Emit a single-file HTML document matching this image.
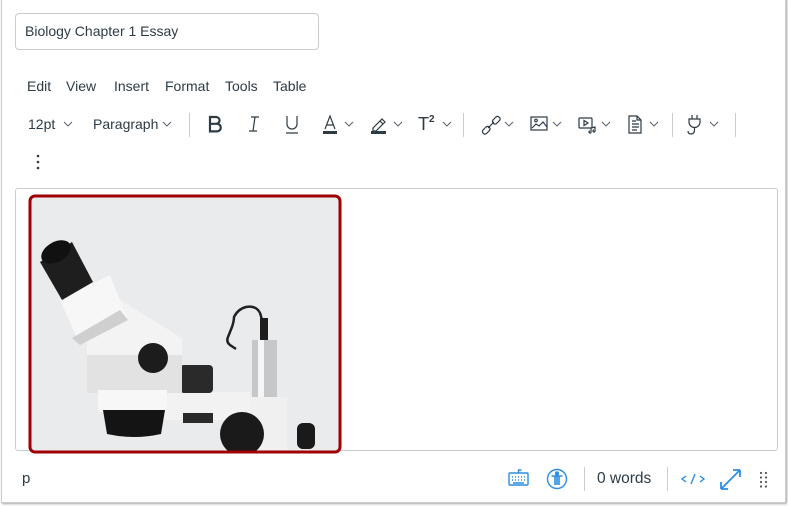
<!DOCTYPE html>
<html><head><meta charset="utf-8">
<style>
*{margin:0;padding:0;box-sizing:border-box}
body{width:788px;height:506px;background:#fff;position:relative;overflow:hidden;font-family:"Liberation Sans",sans-serif;color:#2d3b45}
.frame{position:absolute;left:1px;top:-2px;width:785px;height:505px;border:1px solid #c7cdd1;box-shadow:1px 1px 2px rgba(0,0,0,.35)}
.abs{position:absolute}
.title{left:15px;top:13px;width:304px;height:37px;border:1px solid #c7cdd1;border-radius:4px;font-size:14px;line-height:35px;padding-left:9px}
.menu{top:78px;font-size:14px}
.tb{top:116px;font-size:14px}
.sep{width:1px;background:#c7cdd1}
svg{position:absolute;overflow:visible}
.edit{left:15px;top:188px;width:763px;height:263px;border:1px solid #c7cdd1;border-radius:3px}
.blue{stroke:#2b8de3;fill:none}
</style></head><body>
<div class="frame"></div>
<div class="abs title">Biology Chapter 1 Essay</div>
<div class="abs menu" style="left:27px">Edit</div>
<div class="abs menu" style="left:66px">View</div>
<div class="abs menu" style="left:114px">Insert</div>
<div class="abs menu" style="left:165px">Format</div>
<div class="abs menu" style="left:225px">Tools</div>
<div class="abs menu" style="left:273px">Table</div>

<div class="abs tb" style="left:28px">12pt</div>
<div class="abs tb" style="left:93px">Paragraph</div>
<div class="abs sep" style="left:189px;top:113px;height:24px"></div>
<div class="abs sep" style="left:463px;top:113px;height:24px"></div>
<div class="abs sep" style="left:672px;top:113px;height:24px"></div>
<div class="abs sep" style="left:735px;top:113px;height:24px"></div>
<div class="abs" style="left:418px;top:114px;font-size:18px">T<span style="font-size:10px;vertical-align:8px;font-weight:bold">2</span></div>

<svg width="788" height="200" style="left:0;top:0" fill="none" stroke="#2d3b45" stroke-width="1.2">
 <g stroke-width="0.9" stroke="#556">
 <polyline points="64,122 68,126 72,122"/><polyline points="163,122 167,126 171,122"/>
 <polyline points="345,122 349,126 353,122"/><polyline points="394,122 398,126 402,122"/>
 <polyline points="443,122 447,126 451,122"/><polyline points="505,122 509,126 513,122"/>
 <polyline points="553,122 557,126 561,122"/><polyline points="602,122 606,126 610,122"/>
 <polyline points="650,122 654,126 658,122"/><polyline points="710,122 714,126 718,122"/>
 </g>
 <path d="M210 117h6a3.6 3.4 0 0 1 0 6.8h-6zM210 123.8h7a3.8 3.8 0 0 1 0 7.6h-7zM210 116v16" stroke-width="2.2"/>
 <path d="M251 117h8M249 131h8M255 117l-2 14"/>
 <path d="M287 116v8a5 5 0 0 0 10 0v-8M286 133h12"/>
 <path d="M325 129l5-13 5 13M327 125h6"/><rect x="323" y="131" width="14" height="3" fill="#2d3b45" stroke="none"/>
 <path d="M373 128l9-9 3 3-9 9h-3zM380 121l3 3"/><rect x="371" y="131" width="15" height="3" fill="#2d3b45" stroke="none"/>
 <path d="M486 127l-3 3a2.5 2.5 0 0 0 3.5 3.5l3-3a2.5 2.5 0 0 0-3.5-3.5zM496 117l-3 3a2.5 2.5 0 0 0 3.5 3.5l3-3a2.5 2.5 0 0 0-3.5-3.5zM488 128l6-6"/>
 <rect x="531" y="117" width="16" height="13"/><path d="M532 128l4-4 3 2 4-4 4 5"/><circle cx="536" cy="120.5" r="1.3"/>
 <rect x="579" y="118" width="13" height="10" rx="1"/><path d="M584 120.5v5l4-2.5z"/><path d="M591 132v-4l4-1v4M591 132a1 1 0 1 1-1-1M595 131a1 1 0 1 1-1-1"/>
 <path d="M629 116h8l4 4v13h-12zM637 116v4h4M632 121h4M632 124h7M632 127h7M632 130h5"/>
 <path d="M692 115v4M697 115v4M689 119h11v3a5 5 0 0 1-11 0zM694.5 127v3q0 4-3.5 4q-3 0-3-3"/>
 <circle cx="38" cy="156" r="1.3" fill="#2d3b45" stroke="none"/><circle cx="38" cy="162" r="1.3" fill="#2d3b45" stroke="none"/><circle cx="38" cy="168" r="1.3" fill="#2d3b45" stroke="none"/>
</svg>

<div class="abs edit"></div>
<svg width="788" height="506" style="left:0;top:0">
 <defs><clipPath id="c"><rect x="30" y="196" width="310" height="256" rx="5"/></clipPath></defs>
 <g clip-path="url(#c)">
  <rect x="30" y="196" width="310" height="256" fill="#eaebec"/>
  <path d="M236 349l-6-4q-4-3-2-8l4-10q2-6 2-10q4-8 12-10q10-2 14 6q2 5 2 12" stroke="#222" stroke-width="2.5" fill="none"/>
  <rect x="252" y="340" width="25" height="62" fill="#c6c7c9"/><rect x="258" y="340" width="6" height="62" fill="#f5f5f5"/>
  <rect x="260" y="318" width="8" height="22" fill="#1d1d1d"/>
  <rect x="227" y="397" width="60" height="55" fill="#f0f0f0"/>
  <rect x="160" y="392" width="90" height="28" fill="#f2f2f2"/>
  <rect x="180" y="365" width="33" height="28" rx="4" fill="#2a2a2a"/>
  <rect x="183" y="413" width="30" height="10" fill="#2a2a2a"/>
  <polygon points="87,320 120,300 182,338 182,393 87,393" fill="#f3f3f3"/>
  <rect x="87" y="355" width="95" height="38" fill="#e2e2e2"/>
  <polygon points="60,300 110,275 128,320 80,345" fill="#f7f7f7"/>
  <polygon points="80,345 128,320 120,310 72,338" fill="#cfcfcf"/>
  <polygon points="40,262 72,242 93,282 62,300" fill="#1e1e1e"/>
  <ellipse cx="56" cy="252" rx="16" ry="10" transform="rotate(-30 56 252)" fill="#111"/>
  <circle cx="153" cy="358" r="15" fill="#1c1c1c"/>
  <rect x="98" y="390" width="69" height="22" fill="#f7f7f7"/>
  <path d="M103 410h62l-4 24q-27 6-54 0z" fill="#141414"/>
  <circle cx="242" cy="434" r="22" fill="#1a1a1a"/>
  <rect x="297" y="423" width="18" height="26" rx="6" fill="#1a1a1a"/>
 </g>
 <rect x="30" y="196" width="310" height="256" rx="5" fill="none" stroke="#a10000" stroke-width="3"/>
</svg>

<div class="abs" style="left:22px;top:470px;font-size:15px">p</div>
<div class="abs sep" style="left:584px;top:467px;height:24px"></div>
<div class="abs sep" style="left:667px;top:467px;height:24px"></div>
<div class="abs" style="left:597px;top:470px;font-size:15.5px">0 words</div>
<svg width="788" height="506" style="left:0;top:0">
 <g class="blue" stroke-width="1.4">
  <rect x="509" y="473" width="19" height="12" rx="1"/>
  <path d="M518.5 473v-3h3M512 477h1M515 477h1M518 477h1M521 477h1M524 477h1M512 480h1M515 480h1M518 480h1M521 480h1M524 480h1M513 483h11"/>
  <circle cx="557" cy="479" r="9.5"/>
  <circle cx="557" cy="473.5" r="1.5" fill="#2b8de3"/>
  <path d="M551.5 476h11M557 476v9M555 476v9M559 476v9" stroke-width="1.6"/>
  <path d="M686 476l-4 3 4 3M700 476l4 3-4 3M695 474l-4 10"/>
  <path d="M721 489l19-19M721 489v-7M721 489h7M740 470h-7M740 470v7" stroke-width="1.8"/>
 </g>
 <g fill="#555">
  <circle cx="761" cy="473" r="1.1"/><circle cx="766" cy="473" r="1.1"/>
  <circle cx="761" cy="477.5" r="1.1"/><circle cx="766" cy="477.5" r="1.1"/>
  <circle cx="761" cy="482" r="1.1"/><circle cx="766" cy="482" r="1.1"/>
  <circle cx="761" cy="486.5" r="1.1"/><circle cx="766" cy="486.5" r="1.1"/>
 </g>
</svg>
</body></html>
